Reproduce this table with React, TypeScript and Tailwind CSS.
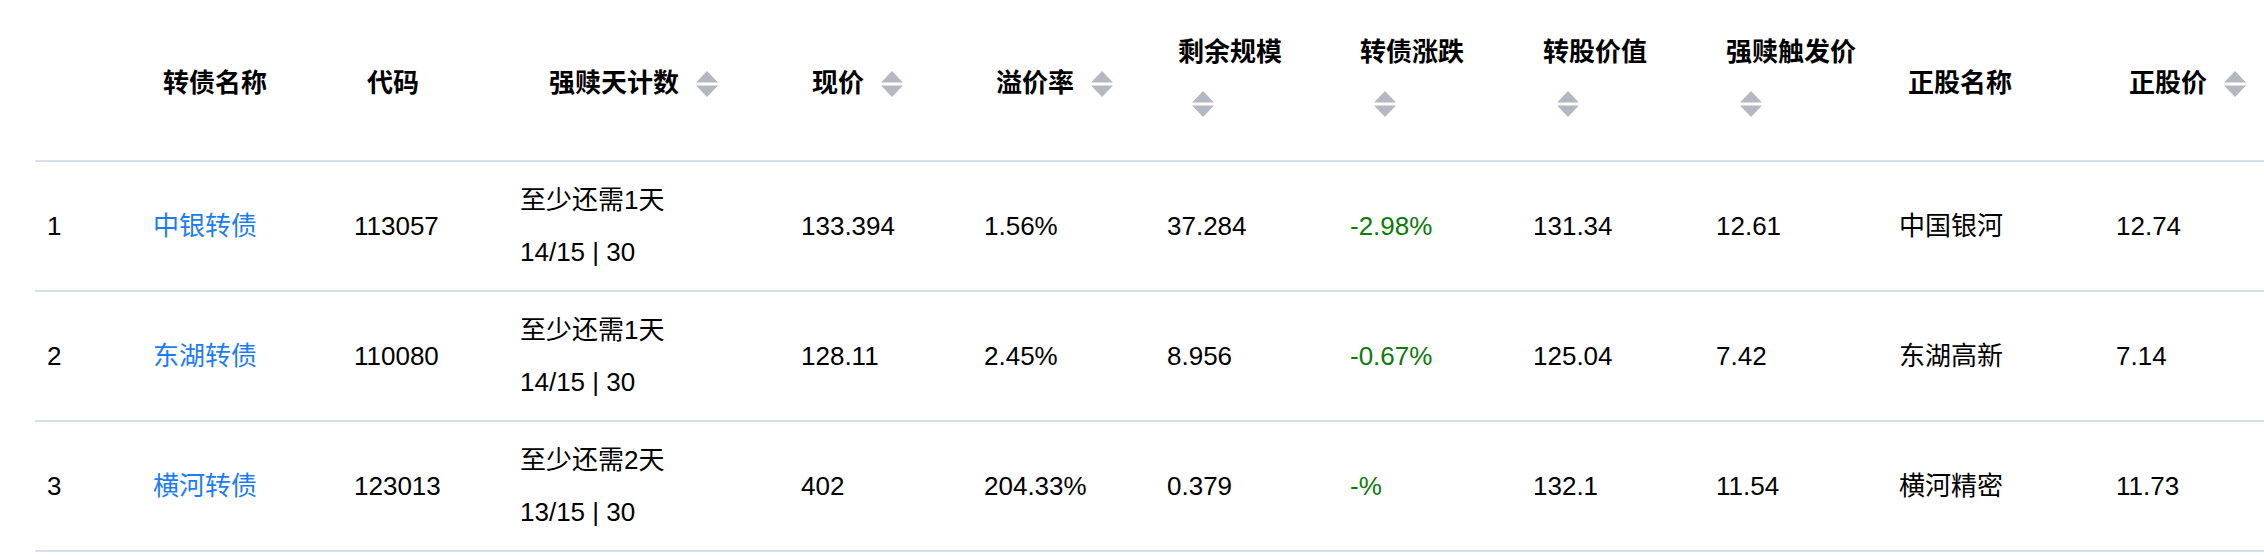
import type { FC } from 'react';

type Header = { label: string; pl: string; sort?: 'inline' | 'below' };

const headers: Header[] = [
    { label: '', pl: 'pl-[22px]' },
    { label: '转债名称', pl: 'pl-[22px]' },
    { label: '代码', pl: 'pl-[25px]' },
    { label: '强赎天计数', pl: 'pl-[41px]', sort: 'inline' },
    { label: '现价', pl: 'pl-[23px]', sort: 'inline' },
    { label: '溢价率', pl: 'pl-[24px]', sort: 'inline' },
    { label: '剩余规模', pl: 'pl-[23px]', sort: 'below' },
    { label: '转债涨跌', pl: 'pl-[22px]', sort: 'below' },
    { label: '转股价值', pl: 'pl-[22px]', sort: 'below' },
    { label: '强赎触发价', pl: 'pl-[22px]', sort: 'below' },
    { label: '正股名称', pl: 'pl-[21px]' },
    { label: '正股价', pl: 'pl-[25px]', sort: 'inline' },
];

type Row = {
    idx: number;
    name: string;
    code: string;
    days: string;
    count: string;
    price: string;
    premium: string;
    scale: string;
    change: string;
    convValue: string;
    trigger: string;
    stock: string;
    stockPrice: string;
};

const rows: Row[] = [
    {
        idx: 1,
        name: '中银转债',
        code: '113057',
        days: '至少还需1天',
        count: '14/15 | 30',
        price: '133.394',
        premium: '1.56%',
        scale: '37.284',
        change: '-2.98%',
        convValue: '131.34',
        trigger: '12.61',
        stock: '中国银河',
        stockPrice: '12.74',
    },
    {
        idx: 2,
        name: '东湖转债',
        code: '110080',
        days: '至少还需1天',
        count: '14/15 | 30',
        price: '128.11',
        premium: '2.45%',
        scale: '8.956',
        change: '-0.67%',
        convValue: '125.04',
        trigger: '7.42',
        stock: '东湖高新',
        stockPrice: '7.14',
    },
    {
        idx: 3,
        name: '横河转债',
        code: '123013',
        days: '至少还需2天',
        count: '13/15 | 30',
        price: '402',
        premium: '204.33%',
        scale: '0.379',
        change: '-%',
        convValue: '132.1',
        trigger: '11.54',
        stock: '横河精密',
        stockPrice: '11.73',
    },
];

const grid =
    'grid grid-cols-[106px_201px_166px_281px_183px_183px_183px_183px_183px_183px_217px_1fr] border-b-2 border-[#d8e1e9]';

const SortIcon: FC = () => (
    <svg className="shrink-0" width="22" height="26" viewBox="0 0 22 26">
        <polygon points="11,0 22,11.5 0,11.5" fill="#b3b8c1" />
        <polygon points="0,14.5 22,14.5 11,26" fill="#b3b8c1" />
    </svg>
);

const HeaderCell: FC<{ h: Header }> = ({ h }) => {
    if (h.sort === 'below') {
        return (
            <div className={`flex flex-col justify-center pb-[4px] ${h.pl}`}>
                <span className="h-[52px] leading-[52px] whitespace-nowrap">{h.label}</span>
                <span className="flex h-[52px] items-center pl-[14px]">
                    <SortIcon />
                </span>
            </div>
        );
    }
    return (
        <div className={`flex items-center gap-[17px] whitespace-nowrap pt-[7px] ${h.pl}`}>
            <span>{h.label}</span>
            {h.sort === 'inline' && <SortIcon />}
        </div>
    );
};

const Cell: FC<{ children: React.ReactNode; className?: string }> = ({ children, className = '' }) => (
    <div className={`flex items-center pl-3 whitespace-nowrap ${className}`}>{children}</div>
);

export default function App() {
    return (
        <div
            className="min-h-[556px] w-[2264px] bg-white pl-[35px] text-[26px] text-black"
            style={{ fontFamily: '"Liberation Sans", "Noto Sans CJK SC", sans-serif' }}
        >
            <div className={`${grid} h-[162px] font-bold`}>
                {headers.map((h, i) => (
                    <HeaderCell key={i} h={h} />
                ))}
            </div>

            {rows.map((r) => (
                <div key={r.idx} className={`${grid} h-[130px]`}>
                    <Cell>{r.idx}</Cell>
                    <Cell className="text-[#1c7cf4]">{r.name}</Cell>
                    <Cell>{r.code}</Cell>
                    <div className="flex flex-col justify-center pl-3 whitespace-nowrap">
                        <span className="h-[52px] leading-[52px]">{r.days}</span>
                        <span className="h-[52px] leading-[52px]">{r.count}</span>
                    </div>
                    <Cell>{r.price}</Cell>
                    <Cell>{r.premium}</Cell>
                    <Cell>{r.scale}</Cell>
                    <Cell className="text-[#0b7b0b]">{r.change}</Cell>
                    <Cell>{r.convValue}</Cell>
                    <Cell>{r.trigger}</Cell>
                    <Cell>{r.stock}</Cell>
                    <Cell>{r.stockPrice}</Cell>
                </div>
            ))}
        </div>
    );
}
